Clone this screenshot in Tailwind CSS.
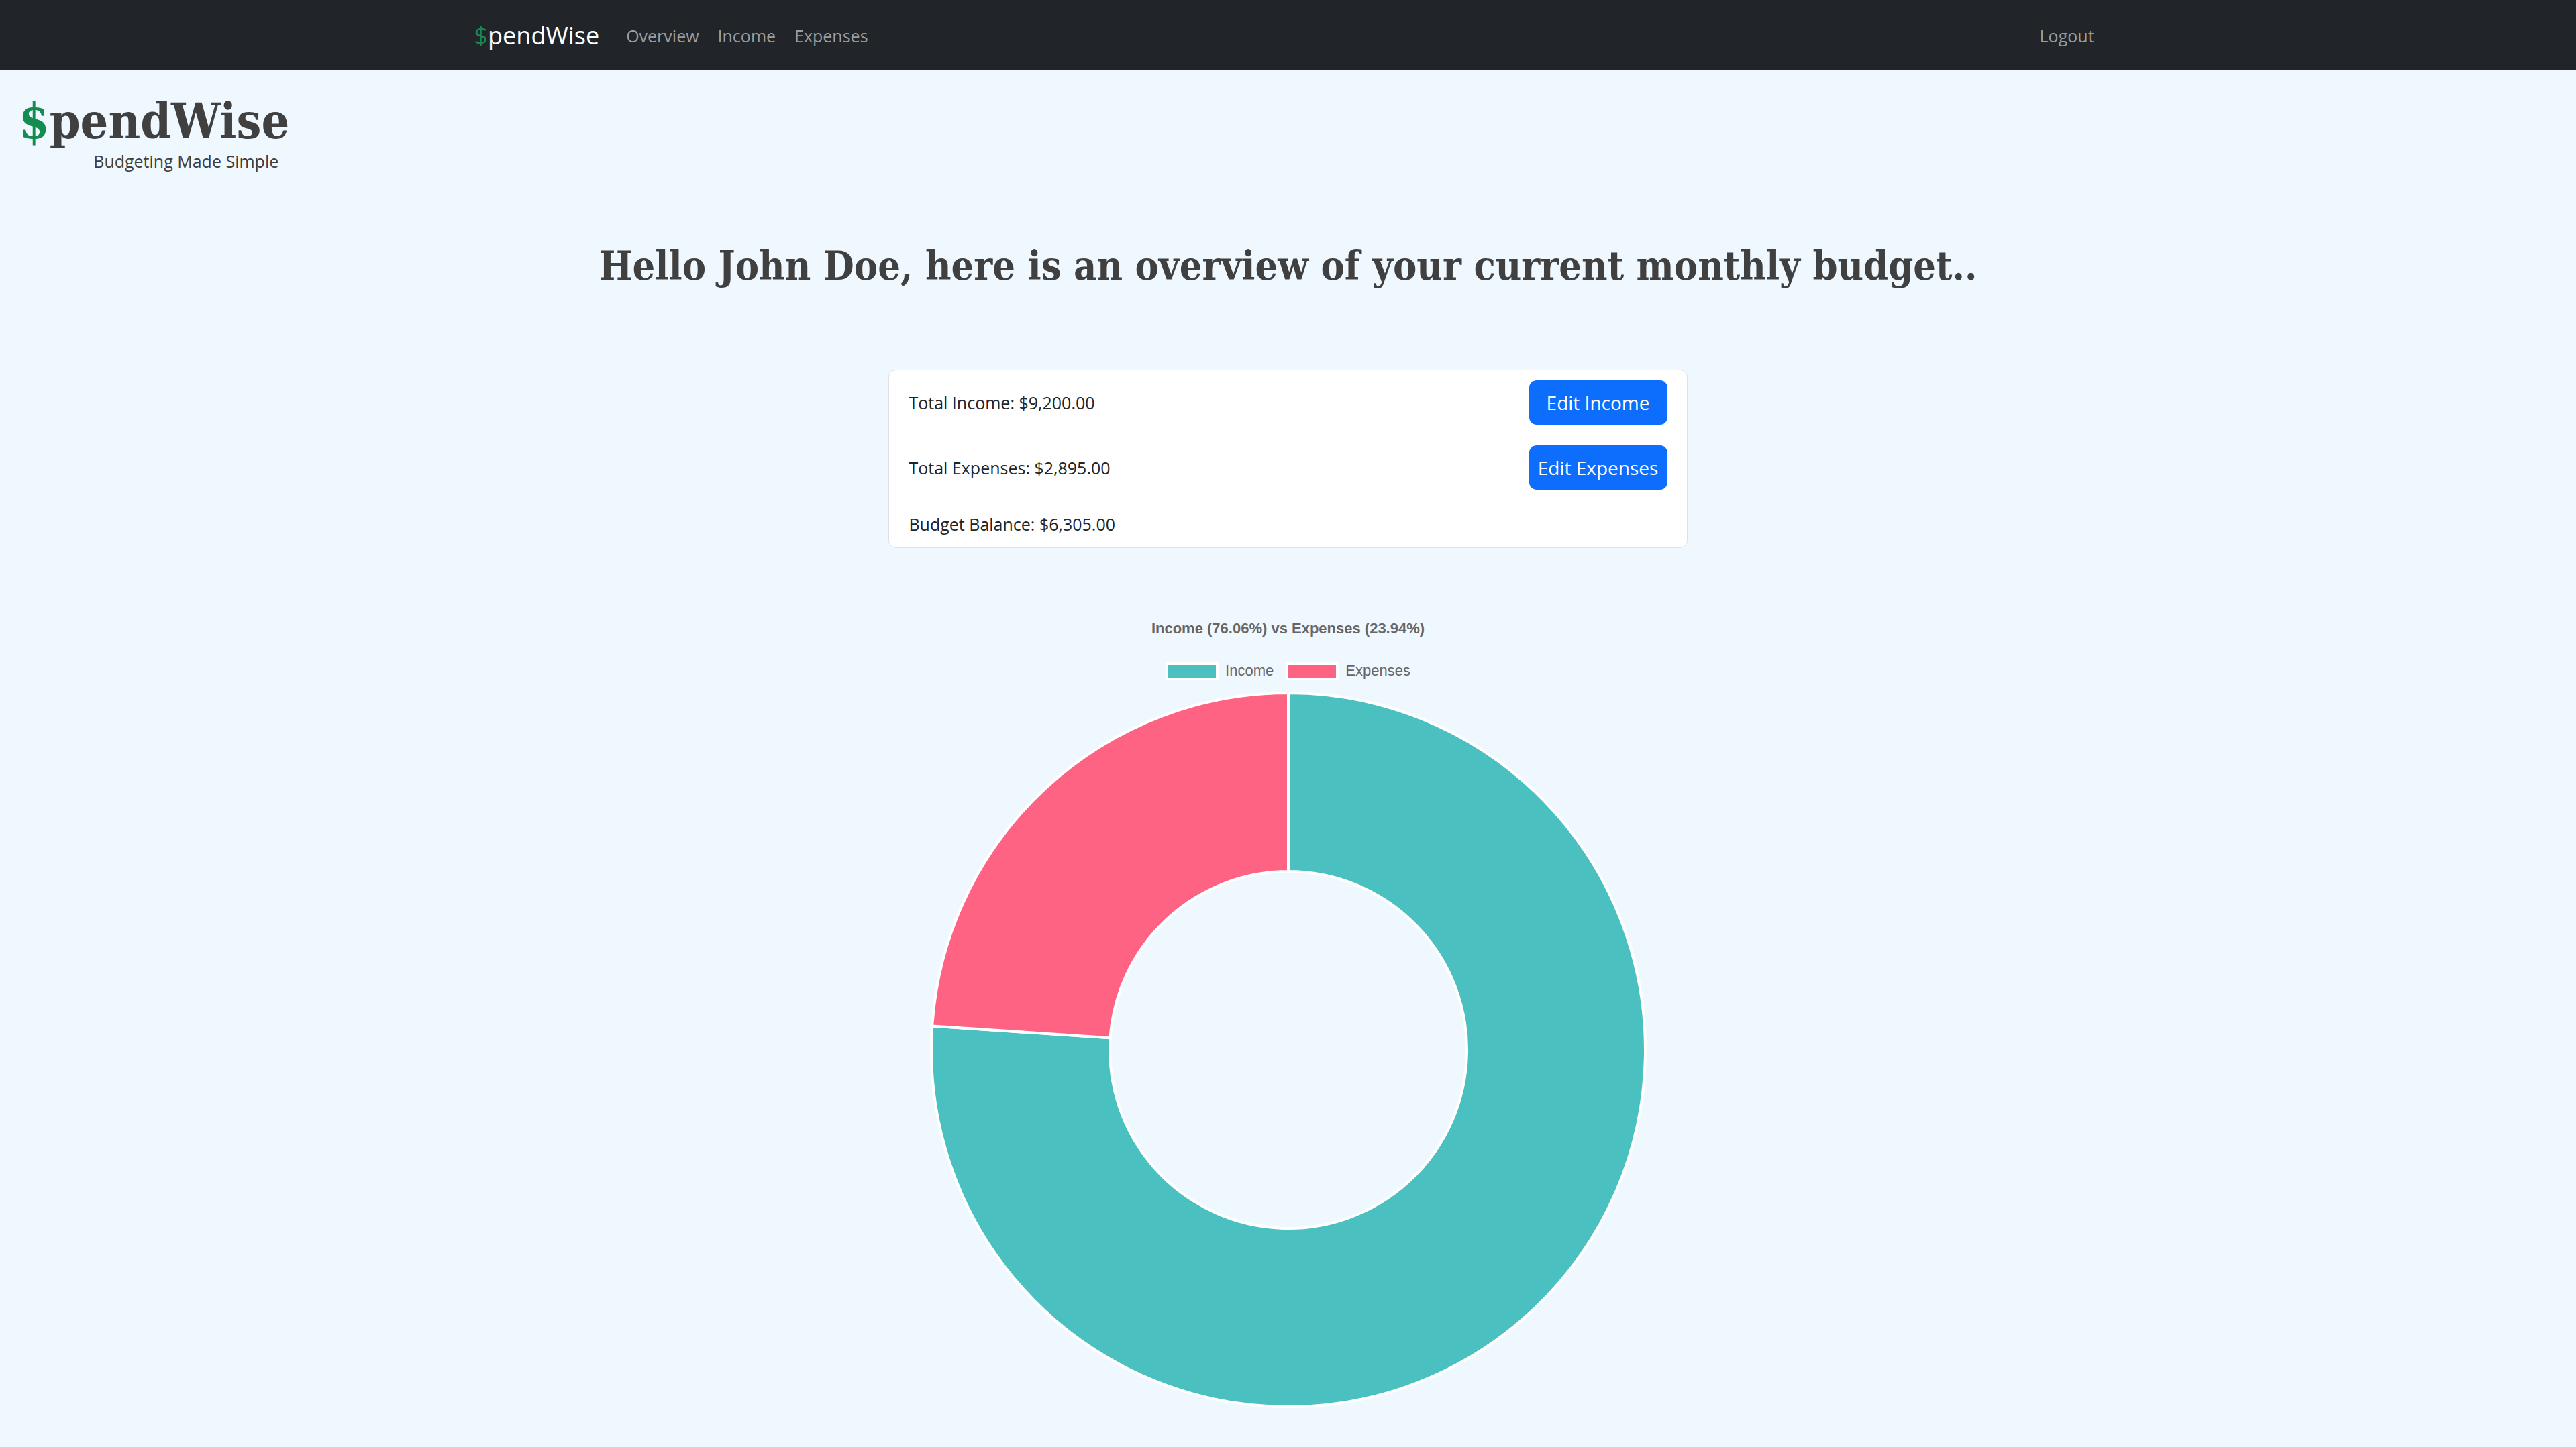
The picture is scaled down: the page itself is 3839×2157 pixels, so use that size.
<!DOCTYPE html>
<html lang="en">
<head>
<meta charset="utf-8">
<title>SpendWise</title>
<script src="https://cdn.jsdelivr.net/npm/@tailwindcss/browser@4"></script>
</head>
<body class="min-h-screen bg-[#f0f8ff] font-['Open_Sans',sans-serif] text-[25px] leading-[38px] text-[#212529]">
  <nav class="bg-[#212529]">
    <div class="mx-auto flex h-[105px] w-full max-w-[2426px] items-center">
      <a href="#" class="mr-10 text-[36px] leading-[56px] text-white"><span class="text-[#198754]">$</span>pendWise</a>
      <div class="flex flex-1 items-center gap-7 text-[#9b9d9e]">
        <a href="#">Overview</a>
        <a href="#">Income</a>
        <a href="#">Expenses</a>
        <a href="#" class="ml-auto mr-3">Logout</a>
      </div>
    </div>
  </nav>

  <header class="flex pt-[34px] pl-7">
    <div class="flex flex-col items-end">
      <p class="font-['DejaVu_Serif_Condensed','DejaVu_Serif',serif] text-[73px] leading-[82px] font-bold text-[#404040]"><span class="text-[#128c4f]">$</span>pendWise</p>
      <p class="pr-4 text-[#404040]">Budgeting Made Simple</p>
    </div>
  </header>

  <main class="flex flex-col items-center">
    <h1 class="mt-[98px] text-center font-['DejaVu_Serif_Condensed','DejaVu_Serif',serif] text-[59px] leading-[80px] font-bold text-[#404040]">Hello John Doe, here is an overview of your current monthly budget..</h1>

    <ul class="mt-[114px] w-[31%] divide-y divide-[#dee2e6] rounded-[11px] border border-[#dee2e6] bg-white">
      <li class="flex items-center justify-between px-[29px] py-[15px]">Total Income: $9,200.00
        <button class="h-[66px] w-[206px] rounded-[11px] bg-[#0d6efd] text-[28px] text-white">Edit Income</button>
      </li>
      <li class="flex items-center justify-between px-[29px] py-[15px]">Total Expenses: $2,895.00
        <button class="h-[66px] w-[206px] rounded-[11px] bg-[#0d6efd] text-[28px] text-white">Edit Expenses</button>
      </li>
      <li class="px-[29px] py-4">Budget Balance: $6,305.00</li>
    </ul>

    <figure class="mt-[104px] flex w-full max-w-[1068px] flex-col items-center font-['Liberation_Sans',sans-serif] text-[22px] leading-[32px] text-[#666666]">
      <figcaption class="font-bold">Income (76.06%) vs Expenses (23.94%)</figcaption>
      <div class="mt-[31px] flex gap-[18px]">
        <span class="flex items-center gap-2.5"><i class="h-[27px] w-[79px] border-4 border-white bg-[#4bc0c0]"></i>Income</span>
        <span class="flex items-center gap-2.5"><i class="h-[27px] w-[79px] border-4 border-white bg-[#ff6384]"></i>Expenses</span>
      </div>
      <svg class="mt-[15px] w-full" viewBox="-534 -534 1068 1068" stroke="#fff" stroke-width="4" stroke-linejoin="bevel" role="img" aria-label="Income compared with expenses">
        <path fill="#4bc0c0" d="M0-532A532 532 0 1 1-530.8-35.5L-265.4-17.8A266 266 0 1 0 0-266Z"/>
        <path fill="#ff6384" d="M-530.8-35.5A532 532 0 0 1 0-532V-266A266 266 0 0 0-265.4-17.8Z"/>
      </svg>
    </figure>
  </main>
</body>
</html>
